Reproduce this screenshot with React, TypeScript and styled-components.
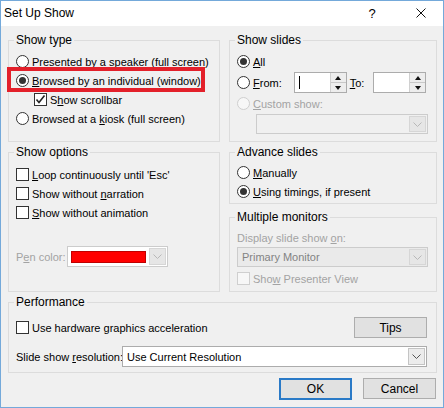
import React from 'react';
import styled, { createGlobalStyle } from 'styled-components';

const GlobalStyle = createGlobalStyle`
  html, body { margin: 0; padding: 0; background: #ffffff; }
  body {
    font-family: "Liberation Sans", Arial, sans-serif;
    font-size: 11px;
    color: #000;
  }
  * { box-sizing: border-box; }
`;

const DISABLED = '#a3a3a3';

const Window = styled.div`
  width: 444px;
  height: 408px;
  border: 1px solid #74a9da;
  background: #f0f0f0;
  display: flex;
  flex-direction: column;
`;

const TitleBar = styled.div`
  height: 25px;
  background: #fff;
  display: flex;
  align-items: center;
  padding: 0 0 1px 3px;
  font-size: 12px;
`;

const TitleText = styled.span`
  flex: 1;
`;

const Help = styled.span`
  font-size: 13px;
  width: 20px;
  margin-right: 34px;
  text-align: center;
`;

const Close = styled.svg`
  width: 10px;
  height: 10px;
  margin-right: 17px;
`;

const Body = styled.div`
  flex: 1;
  padding: 14px 6px 0 7px;
  display: flex;
  flex-direction: column;
`;

const TopGrid = styled.div`
  display: grid;
  grid-template-columns: 212px 208px;
  column-gap: 9px;
`;

const Column = styled.div`
  display: flex;
  flex-direction: column;
`;

const Group = styled.div<{ $h: number; $mt?: number; $pt: number }>`
  position: relative;
  height: ${p => p.$h}px;
  margin-top: ${p => p.$mt ?? 0}px;
  border: 1px solid #dcdcdc;
  padding: ${p => p.$pt}px 8px 0 7px;
  display: flex;
  flex-direction: column;
`;

const GroupTitle = styled.span`
  position: absolute;
  top: -9px;
  left: 5px;
  padding: 0 2px;
  line-height: 16px;
  font-size: 12px;
  background: #f0f0f0;
`;

const Row = styled.div<{ $h?: number; $indent?: number; $mt?: number }>`
  position: relative;
  display: flex;
  align-items: center;
  height: ${p => p.$h ?? 19}px;
  padding-left: ${p => p.$indent ?? 0}px;
  margin-top: ${p => p.$mt ?? 0}px;
  white-space: nowrap;
`;

const Label = styled.span<{ $disabled?: boolean; $w?: number }>`
  color: ${p => (p.$disabled ? DISABLED : '#000')};
  margin-left: 3px;
  ${p => (p.$w ? `width: ${p.$w}px;` : '')}
  u { text-underline-offset: 1px; }
`;

const PlainLabel = styled.span<{ $disabled?: boolean; $w?: number }>`
  color: ${p => (p.$disabled ? DISABLED : '#000')};
  ${p => (p.$w ? `width: ${p.$w}px; flex: none;` : '')}
  u { text-underline-offset: 1px; }
`;

const RadioCircle = styled.span<{ $checked?: boolean; $disabled?: boolean }>`
  width: 13px;
  height: 13px;
  flex: none;
  border-radius: 50%;
  border: 1px solid ${p => (p.$disabled ? '#cfcfcf' : '#333')};
  background: ${p => (p.$disabled ? '#f7f7f7' : '#fff')};
  display: flex;
  align-items: center;
  justify-content: center;
  &::after {
    content: '';
    display: ${p => (p.$checked ? 'block' : 'none')};
    width: 7px;
    height: 7px;
    border-radius: 50%;
    background: #333;
  }
`;

const CheckBox = styled.span<{ $disabled?: boolean }>`
  width: 13px;
  height: 13px;
  flex: none;
  border: 1px solid ${p => (p.$disabled ? '#cfcfcf' : '#333')};
  background: ${p => (p.$disabled ? '#f7f7f7' : '#fff')};
  display: flex;
  align-items: center;
  justify-content: center;
`;

const Highlight = styled.span`
  position: absolute;
  left: -9px;
  top: -4px;
  width: 198px;
  height: 25px;
  border: 4px solid #e3202a;
  pointer-events: none;
`;

const SpinField = styled.div<{ $ml: number }>`
  width: 53px;
  height: 21px;
  margin-left: ${p => p.$ml}px;
  border: 1px solid #acacac;
  background: #fff;
  display: flex;
  flex: none;
`;

const Caret = styled.span`
  width: 1px;
  height: 13px;
  background: #000;
  margin: 3px 0 0 4px;
`;

const SpinButtons = styled.div`
  margin-left: auto;
  width: 16px;
  display: flex;
  flex-direction: column;
  border-left: 1px solid #d0d0d0;
  background: #ededed;
`;

const SpinHalf = styled.div<{ $up?: boolean }>`
  flex: 1;
  display: flex;
  align-items: center;
  justify-content: center;
  ${p => (p.$up ? 'border-bottom: 1px solid #c8c8c8;' : '')}
  &::after {
    content: '';
    border-left: 3px solid transparent;
    border-right: 3px solid transparent;
    ${p => (p.$up ? 'border-bottom: 4px solid #111;' : 'border-top: 4px solid #111;')}
  }
`;

const Select = styled.div<{ $w?: number; $h?: number; $ml?: number; $disabled?: boolean; $bg?: string }>`
  height: ${p => p.$h ?? 20}px;
  ${p => (p.$w ? `width: ${p.$w}px; flex: none;` : 'flex: 1;')}
  margin-left: ${p => p.$ml ?? 0}px;
  border: 1px solid ${p => (p.$disabled ? '#cccccc' : '#acacac')};
  background: ${p => p.$bg ?? '#fff'};
  display: flex;
  align-items: center;
  padding: 0 1px 0 4px;
  color: ${p => (p.$disabled ? '#838383' : '#000')};
`;

const SelectText = styled.span`
  flex: 1;
  white-space: nowrap;
  overflow: hidden;
`;

const Arrow = styled.span<{ $disabled?: boolean }>`
  width: 17px;
  height: calc(100% - 2px);
  flex: none;
  display: flex;
  align-items: center;
  justify-content: center;
  border: 1px solid ${p => (p.$disabled ? '#d6d6d6' : '#c4c4c4')};
  background: ${p => (p.$disabled ? '#e6e6e6' : '#ececec')};
`;

const Swatch = styled.span`
  width: 76px;
  height: 12px;
  background: #ff0000;
  border: 1px solid #c00000;
  margin: 0 3px 0 -1px;
`;

const Button = styled.button<{ $primary?: boolean; $ml?: number }>`
  width: 73px;
  height: ${p => (p.$primary ? 22 : 21)}px;
  margin-left: ${p => p.$ml ?? 0}px;
  font-family: inherit;
  font-size: 12px;
  color: #000;
  background: #e1e1e1;
  border: ${p => (p.$primary ? '2px solid #2a7ac7' : '1px solid #adadad')};
  padding: 0;
  flex: none;
`;

const PerfRow = styled.div<{ $mt?: number; $h: number }>`
  display: flex;
  align-items: center;
  height: ${p => p.$h}px;
  margin-top: ${p => p.$mt ?? 0}px;
  padding-right: 1px;
  white-space: nowrap;
`;

const Footer = styled.div`
  display: flex;
  justify-content: flex-end;
  margin-top: 5px;
  padding-right: 1px;
`;

const Chevron = ({ disabled }: { disabled?: boolean }) => (
  <svg width="9" height="5" viewBox="0 0 9 5">
    <polyline points="0.5,0.5 4.5,4.5 8.5,0.5" fill="none" stroke={disabled ? '#b8b8b8' : '#555'} strokeWidth="1" />
  </svg>
);

const Check = () => (
  <svg width="11" height="11" viewBox="0 0 11 11">
    <polyline points="1.5,5.5 4,8.5 9.5,1.5" fill="none" stroke="#222" strokeWidth="1.6" />
  </svg>
);

const Radio = ({ checked, disabled, children }: { checked?: boolean; disabled?: boolean; children: React.ReactNode }) => (
  <>
    <RadioCircle $checked={checked} $disabled={disabled} />
    <Label $disabled={disabled}>{children}</Label>
  </>
);

const Checkbox = ({ checked, disabled, children }: { checked?: boolean; disabled?: boolean; children: React.ReactNode }) => (
  <>
    <CheckBox $disabled={disabled}>{checked && <Check />}</CheckBox>
    <Label $disabled={disabled}>{children}</Label>
  </>
);

const Spinner = ({ ml, caret }: { ml: number; caret?: boolean }) => (
  <SpinField $ml={ml}>
    {caret && <Caret />}
    <SpinButtons>
      <SpinHalf $up />
      <SpinHalf />
    </SpinButtons>
  </SpinField>
);

export default function App() {
  return (
    <>
      <GlobalStyle />
      <Window>
        <TitleBar>
          <TitleText>Set Up Show</TitleText>
          <Help>?</Help>
          <Close viewBox="0 0 10 10">
            <path d="M0.5 0.5 L9.5 9.5 M9.5 0.5 L0.5 9.5" stroke="#111" strokeWidth="1" />
          </Close>
        </TitleBar>
        <Body>
          <TopGrid>
            <Column>
              <Group $h={102} $pt={11}>
                <GroupTitle>Show type</GroupTitle>
                <Row>
                  <Radio>Presented by a speaker (full screen)</Radio>
                </Row>
                <Row>
                  <Radio checked><u>B</u>rowsed by an individual (window)</Radio>
                  <Highlight />
                </Row>
                <Row $indent={18}>
                  <Checkbox checked>S<u>h</u>ow scrollbar</Checkbox>
                </Row>
                <Row>
                  <Radio>Browsed at a <u>k</u>iosk (full screen)</Radio>
                </Row>
              </Group>
              <Group $h={140} $mt={10} $pt={12}>
                <GroupTitle>Show options</GroupTitle>
                <Row>
                  <Checkbox><u>L</u>oop continuously until 'Esc'</Checkbox>
                </Row>
                <Row>
                  <Checkbox>Show without <u>n</u>arration</Checkbox>
                </Row>
                <Row>
                  <Checkbox><u>S</u>how without animation</Checkbox>
                </Row>
                <Row $h={21} $mt={24}>
                  <PlainLabel $disabled $w={51}>P<u>e</u>n color:</PlainLabel>
                  <Select $w={101} $h={21} $disabled $bg="#fff">
                    <Swatch />
                    <Arrow $disabled>
                      <Chevron disabled />
                    </Arrow>
                  </Select>
                </Row>
              </Group>
            </Column>
            <Column>
              <Group $h={102} $pt={11}>
                <GroupTitle>Show slides</GroupTitle>
                <Row>
                  <Radio checked><u>A</u>ll</Radio>
                </Row>
                <Row $h={21} $mt={1}>
                  <Radio><u>F</u>rom:</Radio>
                  <Spinner ml={12} caret />
                  <Label><u>T</u>o:</Label>
                  <Spinner ml={9} />
                </Row>
                <Row $mt={1}>
                  <Radio disabled><u>C</u>ustom show:</Radio>
                </Row>
                <Row $h={20} $mt={1} $indent={19}>
                  <Select $disabled $bg="#f0f0f0">
                    <SelectText />
                    <Arrow $disabled>
                      <Chevron disabled />
                    </Arrow>
                  </Select>
                </Row>
              </Group>
              <Group $h={52} $mt={10} $pt={10}>
                <GroupTitle>Advance slides</GroupTitle>
                <Row>
                  <Radio><u>M</u>anually</Radio>
                </Row>
                <Row>
                  <Radio checked><u>U</u>sing timings, if present</Radio>
                </Row>
              </Group>
              <Group $h={75} $mt={13} $pt={10}>
                <GroupTitle>Multiple monitors</GroupTitle>
                <Row>
                  <PlainLabel $disabled>Display slide show <u>o</u>n:</PlainLabel>
                </Row>
                <Row $h={20}>
                  <Select $disabled $bg="#eaeaea">
                    <SelectText>Primary Monitor</SelectText>
                    <Arrow $disabled>
                      <Chevron disabled />
                    </Arrow>
                  </Select>
                </Row>
                <Row $mt={2}>
                  <Checkbox disabled>Sho<u>w</u> Presenter View</Checkbox>
                </Row>
              </Group>
            </Column>
          </TopGrid>
          <Group $h={71} $mt={10} $pt={14}>
            <GroupTitle>Performance</GroupTitle>
            <PerfRow $h={21}>
              <Checkbox>Use hardware <u>g</u>raphics acceleration</Checkbox>
              <Button style={{ marginLeft: 'auto' }}>Tips</Button>
            </PerfRow>
            <PerfRow $h={21} $mt={8}>
              <PlainLabel $w={106}>Slide show <u>r</u>esolution:</PlainLabel>
              <Select $h={21}>
                <SelectText>Use Current Resolution</SelectText>
                <Arrow>
                  <Chevron />
                </Arrow>
              </Select>
            </PerfRow>
          </Group>
          <Footer>
            <Button $primary>OK</Button>
            <Button $ml={11}>Cancel</Button>
          </Footer>
        </Body>
      </Window>
    </>
  );
}
